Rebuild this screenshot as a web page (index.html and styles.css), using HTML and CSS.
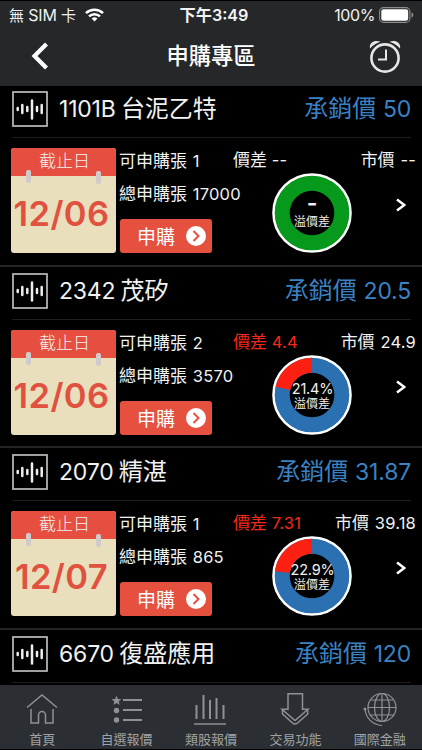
FILE: index.html
```html
<!DOCTYPE html>
<html lang="zh-Hant">

<head>
    <meta charset="UTF-8">
    <meta name="viewport" content="width=device-width, initial-scale=1.0">
    <title>申購專區</title>
    <link rel="stylesheet" href="styles.css">
</head>

<body>
    <svg class="symbols" width="0" height="0">
        <symbol id="wave" viewBox="0 0 36 36">
            <rect x="1" y="1" width="34" height="34" fill="#000" stroke="#bdbdbd" stroke-width="1.7" />
            <path d="M5.7 17v2M10.3 14v8M15.3 16v4M20 9.5v18M25 16v4M29.7 14v8" stroke="#eee" stroke-width="2.5" stroke-linecap="round" />
        </symbol>
        <symbol id="go" viewBox="0 0 20 20">
            <circle cx="10" cy="10" r="10" fill="#fff" />
            <path d="M7.5 5l5 5-5 5" fill="none" stroke="#e5503f" stroke-width="2" />
        </symbol>
        <symbol id="next" viewBox="0 0 10 14">
            <path d="M1 1.5L8.3 7 1 12.5" fill="none" stroke="#fff" stroke-width="2.5" />
        </symbol>
    </svg>

    <header>
        <div class="status-bar">
            <div class="carrier">
                <span>無 <b>SIM</b> 卡</span>
                <svg width="19" height="14" viewBox="0 0 19 14" fill="none" stroke="#fff" stroke-width="2.5">
                    <path d="M1 5.2a12.3 12.3 0 0 1 17 0M4 8.4a8 8 0 0 1 11 0" />
                    <path d="M6.6 10.6a4.4 4.4 0 0 1 5.8 0L9.5 13.5z" fill="#fff" stroke="none" />
                </svg>
            </div>
            <div class="time">下午<span>3:49</span></div>
            <div class="battery">
                <span>100%</span>
                <svg width="35" height="16" viewBox="0 0 35 16">
                    <rect x=".6" y=".6" width="30.3" height="14.8" rx="4" fill="none" stroke="#8b8c8d" stroke-width="1.1" />
                    <rect x="2.3" y="2.3" width="26.9" height="11.4" rx="2.2" fill="#fff" />
                    <path d="M32.5 5.3c2.4.8 2.4 4.6 0 5.4z" fill="#8b8c8d" />
                </svg>
            </div>
        </div>
        <div class="title-bar">
            <svg class="back" width="18" height="28" viewBox="0 0 18 28">
                <path d="M15.5 2L3.5 14l12 12" fill="none" stroke="#fff" stroke-width="4.2" />
            </svg>
            <h1>申購專區</h1>
            <svg class="alarm" width="32" height="34" viewBox="0 0 32 34">
                <g fill="none" stroke="#e6e6e6">
                    <circle cx="16" cy="19" r="13.6" stroke-width="2.6" />
                    <path d="M17 10.5v10H9" stroke-width="2" />
                </g>
                <path d="M1 9.5C-.2 4 5 .2 11.5 2.7 7 4 4 6.3 1 9.5zM31 9.5C32.2 4 27 .2 20.5 2.7 25 4 28 6.3 31 9.5z" fill="#e6e6e6" />
            </svg>
        </div>
    </header>

    <main>
        <section class="stock">
            <div class="stock-head">
                <svg class="wave"><use href="#wave" /></svg>
                <h2><span>1101B</span> 台泥乙特</h2>
                <p>承銷價 <span>50</span></p>
            </div>
            <div class="stock-body">
                <div class="calendar">
                    <div class="calendar-top">截止日</div>
                    <i class="pin left"></i><i class="pin right"></i>
                    <div class="date">12/06</div>
                </div>
                <div class="info">
                    <p>可申購張 <span>1</span></p>
                    <p>總申購張 <span>17000</span></p>
                    <button>申購<svg width="20" height="20"><use href="#go" /></svg></button>
                </div>
                <div class="market">
                    <div class="prices">
                        <span>價差 <b>--</b></span>
                        <span>市價 <b>--</b></span>
                    </div>
                    <div class="chart-row">
                        <svg class="donut" viewBox="0 0 80 80">
                            <circle cx="40" cy="40" r="38.3" class="rim" />
                            <circle cx="40" cy="40" r="29.8" class="ring green" />
                            <text x="40" y="38" class="dash">-</text>
                            <text x="40" y="53" class="label">溢價差</text>
                        </svg>
                        <svg class="next"><use href="#next" /></svg>
                    </div>
                </div>
            </div>
        </section>

        <section class="stock">
            <div class="stock-head">
                <svg class="wave"><use href="#wave" /></svg>
                <h2><span>2342</span> 茂矽</h2>
                <p>承銷價 <span>20.5</span></p>
            </div>
            <div class="stock-body">
                <div class="calendar">
                    <div class="calendar-top">截止日</div>
                    <i class="pin left"></i><i class="pin right"></i>
                    <div class="date">12/06</div>
                </div>
                <div class="info">
                    <p>可申購張 <span>2</span></p>
                    <p>總申購張 <span>3570</span></p>
                    <button>申購<svg width="20" height="20"><use href="#go" /></svg></button>
                </div>
                <div class="market">
                    <div class="prices">
                        <span class="up">價差 <b>4.4</b></span>
                        <span>市價 <b>24.9</b></span>
                    </div>
                    <div class="chart-row">
                        <svg class="donut" viewBox="0 0 80 80">
                            <circle cx="40" cy="40" r="38.3" class="rim" />
                            <circle cx="40" cy="40" r="29.8" class="ring" />
                            <circle cx="40" cy="40" r="29.8" class="ring red" pathLength="100" stroke-dasharray="0 78.6 21.4 0" transform="rotate(-90 40 40)" />
                            <text x="40.5" y="38.5" class="percent">21.4%</text>
                            <text x="40" y="53" class="label">溢價差</text>
                        </svg>
                        <svg class="next"><use href="#next" /></svg>
                    </div>
                </div>
            </div>
        </section>

        <section class="stock">
            <div class="stock-head">
                <svg class="wave"><use href="#wave" /></svg>
                <h2><span>2070</span> 精湛</h2>
                <p>承銷價 <span>31.87</span></p>
            </div>
            <div class="stock-body">
                <div class="calendar">
                    <div class="calendar-top">截止日</div>
                    <i class="pin left"></i><i class="pin right"></i>
                    <div class="date">12/07</div>
                </div>
                <div class="info">
                    <p>可申購張 <span>1</span></p>
                    <p>總申購張 <span>865</span></p>
                    <button>申購<svg width="20" height="20"><use href="#go" /></svg></button>
                </div>
                <div class="market">
                    <div class="prices">
                        <span class="up">價差 <b>7.31</b></span>
                        <span>市價 <b>39.18</b></span>
                    </div>
                    <div class="chart-row">
                        <svg class="donut" viewBox="0 0 80 80">
                            <circle cx="40" cy="40" r="38.3" class="rim" />
                            <circle cx="40" cy="40" r="29.8" class="ring" />
                            <circle cx="40" cy="40" r="29.8" class="ring red" pathLength="100" stroke-dasharray="0 77.1 22.9 0" transform="rotate(-90 40 40)" />
                            <text x="40.5" y="38.5" class="percent">22.9%</text>
                            <text x="40" y="53" class="label">溢價差</text>
                        </svg>
                        <svg class="next"><use href="#next" /></svg>
                    </div>
                </div>
            </div>
        </section>

        <section class="stock">
            <div class="stock-head">
                <svg class="wave"><use href="#wave" /></svg>
                <h2><span>6670</span> 復盛應用</h2>
                <p>承銷價 <span>120</span></p>
            </div>
        </section>
    </main>

    <nav>
        <a>
            <svg viewBox="0 0 34 34">
                <path d="M2 15.5L17 3l15 12.5M6 17v14h7.5v-8a3.5 3.5 0 0 1 7 0v8H28V17" />
            </svg>
            首頁
        </a>
        <a>
            <svg viewBox="0 0 34 34">
                <path d="M13 8h19M13 18h19M13 28h19" stroke-width="2" />
                <circle cx="6.5" cy="18.5" r="2.7" class="solid" />
                <circle cx="6.5" cy="28" r="2.7" class="solid" />
                <path class="solid" d="M6.5 3.7l1.4 3.2 3.5.3-2.7 2.3.9 3.5-3.1-1.9-3.1 1.9.9-3.5-2.7-2.3 3.5-.3z" />
            </svg>
            自選報價
        </a>
        <a>
            <svg viewBox="0 0 34 34">
                <path d="M2.5 13v14M9.5 3v24M16 8v19M22.5 6v21M29.5 13v14" stroke-width="2" />
                <path d="M0 32h32" />
            </svg>
            類股報價
        </a>
        <a>
            <svg viewBox="0 0 34 34">
                <path d="M10 1.8h14.5v15.5H30L17 28.5 4 17.3h6zM4.5 18.5V22l10 9q2.500 2 5 0l10.200-9v-3.500" />
            </svg>
            交易功能
        </a>
        <a>
            <svg viewBox="0 0 34 34">
                <g stroke-width="1.2">
                    <circle cx="19" cy="15.5" r="14" />
                    <ellipse cx="19" cy="15.5" rx="7.5" ry="14" />
                    <path d="M19 1.5v28M5 15.5h28M7.5 8h23M7.5 23h23M2 17c.5 8.5 7 15.500 17 16.500" />
                </g>
                <circle cx="2" cy="17" r="1.5" class="solid" />
            </svg>
            國際金融
        </a>
    </nav>
</body>

</html>
```
FILE: styles.css
```css
* {
    box-sizing: border-box;
}

body {
    display: flex;
    flex-direction: column;
    width: 422px;
    height: 750px;
    margin: 0;
    overflow: hidden;
    background-color: #000;
    color: #f2f2f2;
    font-family: Inter, "Noto Sans CJK TC", sans-serif;
    border-top: 1px solid #000;
    border-bottom: 1px solid #000;
}

h1,
h2,
p {
    margin: 0;
    font-weight: 400;
}

.symbols {
    position: absolute;
}

header {
    flex: none;
    height: 85px;
    background-color: #252729;
}

.status-bar {
    display: grid;
    grid-template-columns: 1fr auto 1fr;
    align-items: center;
    height: 28px;
    padding: 0 8px 0 9px;
    font-size: 16px;
    line-height: 20px;
}

.carrier,
.battery {
    display: flex;
    align-items: center;
}

.carrier {
    font-size: 15px;
    gap: 9px;
}

.carrier b {
    font-size: 16px;
    font-weight: 400;
    letter-spacing: -0.2px;
}

.time {
    font-weight: 600;
    font-size: 16.2px;
    padding-left: 5px;
}

.battery {
    justify-content: flex-end;
    gap: 4px;
}

.battery span {
    letter-spacing: -0.4px;
}

.title-bar {
    display: flex;
    align-items: center;
    justify-content: space-between;
    height: 54px;
    padding: 0 21px 0 31px;
}

.title-bar h1 {
    font-size: 22.3px;
    line-height: 30px;
    font-weight: 500;
    color: #fff;
    margin-left: 4px;
}

main {
    flex: 1;
    min-height: 0;
    overflow: hidden;
}

.stock {
    height: 181.5px;
    border-top: 2px solid #232426;
    padding: 6px 0 0 12px;
}

/* first row sits right under the header */
.stock:first-child {
    height: 178.6px;
    border-top: none;
    padding-top: 5px;
}

.stock-head {
    display: flex;
    align-items: center;
    height: 47px;
    width: 399px;
    padding-bottom: 10px;
    border-bottom: 1px solid #1e1e1e;
}

.wave {
    width: 36px;
    height: 36px;
}

.stock-head h2,
.stock-head p {
    font-size: 24px;
    line-height: 37px;
    white-space: nowrap;
}

.stock-head h2 {
    margin-left: 11px;
    word-spacing: -1.5px;
}

.stock-head p {
    margin-left: auto;
    color: #3a82c4;
}

.stock-head span {
    font-size: 23px;
    letter-spacing: -0.2px;
}

.stock-body {
    display: flex;
    margin: 10px 0 0 -1px;
    height: 105px;
}

.calendar {
    position: relative;
    width: 105px;
    height: 105px;
    border-radius: 3px;
    overflow: hidden;
    background-color: #e9dfbd;
    text-align: center;
}

.calendar-top {
    height: 28px;
    line-height: 27px;
    font-size: 17px;
    font-weight: 300;
    padding-left: 2px;
    background-color: #e64e40;
}

.pin {
    position: absolute;
    top: 22px;
    width: 5px;
    height: 13px;
    border-radius: 2px;
    background-color: #cfcbcb;
}

.left {
    left: 15px;
}

.right {
    left: 85px;
    top: 23px;
}

.date {
    margin: 17px 4px 0 0;
    font-size: 34.5px;
    line-height: 42px;
    font-weight: 600;
    letter-spacing: 0.4px;
    color: #e0513f;
    white-space: nowrap;
}

.info {
    width: 117px;
    padding-left: 3px;
    font-size: 17px;
    white-space: nowrap;
}

.info p {
    height: 33px;
    line-height: 27px;
    word-spacing: 1px;
}

.info p span,
.prices b {
    font-size: 16.5px;
    font-weight: 400;
    letter-spacing: 0.2px;
}

.info button {
    display: flex;
    align-items: center;
    gap: 11px;
    width: 92px;
    height: 34px;
    margin: 5px 0 0 1px;
    padding: 0 0 0 17px;
    border: none;
    border-radius: 3px;
    background-color: #e5503f;
    color: #fff;
    font: 19px/34px "Noto Sans CJK TC", sans-serif;
}

.market {
    flex: 1;
    padding-right: 6px;
}

.prices {
    display: flex;
    justify-content: space-between;
    height: 25px;
    line-height: 25px;
    font-size: 17px;
    white-space: nowrap;
}

.prices span:last-child {
    word-spacing: 1px;
}

.up {
    color: #f5281c;
}

.chart-row {
    display: flex;
    justify-content: space-between;
    padding: 0 10px 0 39px;
}

.donut {
    width: 80px;
    height: 80px;
}

.rim {
    fill: #000;
    stroke: #fff;
    stroke-width: 3;
}

.ring {
    fill: none;
    stroke: #2b71b2;
    stroke-width: 15;
}

.green {
    stroke: #06991b;
}

.red {
    stroke: #fc2012;
}

.donut text {
    fill: #f2f2f2;
    text-anchor: middle;
}

.percent {
    font-size: 14.5px;
    letter-spacing: -0.2px;
}

.dash {
    font-size: 23px;
    font-weight: 600;
}

.label {
    font-size: 12px;
}

.next {
    width: 10px;
    height: 14px;
    margin-top: 25px;
}

nav {
    display: flex;
    flex: none;
    height: 64px;
    background-color: #2b2f33;
}

nav a {
    flex: 1;
    display: flex;
    flex-direction: column;
    align-items: center;
    padding-top: 7px;
    font-size: 13px;
    line-height: 19px;
    color: #a0a2a4;
}

nav svg {
    width: 34px;
    height: 34px;
    margin-bottom: 4px;
    fill: none;
    stroke: #8f9194;
    stroke-width: 1.5;
}

nav .solid {
    fill: #8f9194;
    stroke: none;
}
```
